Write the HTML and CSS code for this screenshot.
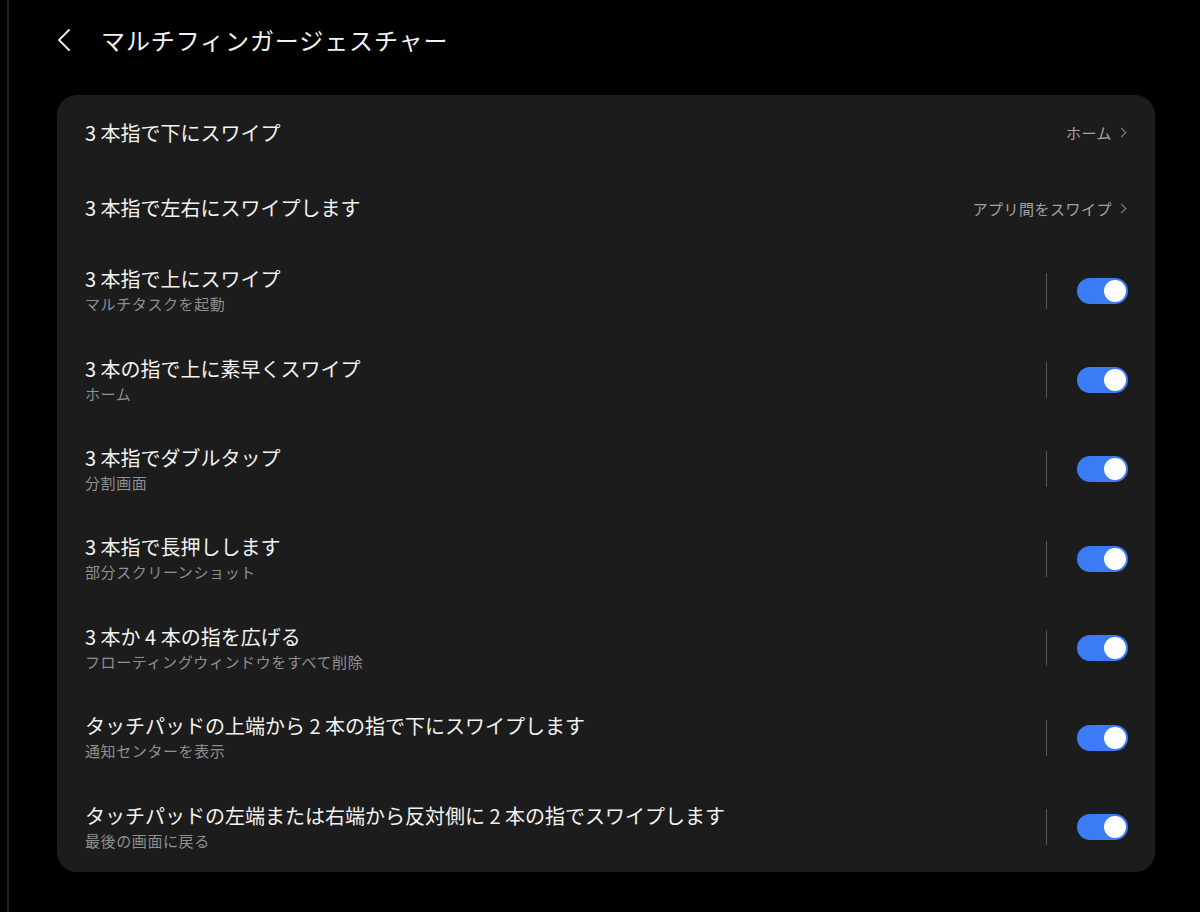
FILE: index.html
```html
<!DOCTYPE html>
<html lang="ja">
  <head>
    <meta charset="UTF-8" />
    <meta name="viewport" content="width=device-width, initial-scale=1.0" />
    <title>マルチフィンガージェスチャー</title>
    <link rel="stylesheet" href="styles.css">
  </head>
  <body>
    <div class="screen">
      <header class="topbar">
        <span class="back">
          <svg width="14" height="24" viewBox="0 0 14 24">
            <path d="M12 2 L2 12 L12 22" fill="none" stroke="#e6e6e6" stroke-width="2" stroke-linecap="round" stroke-linejoin="round"/>
          </svg>
        </span>
        <span class="page-title">マルチフィンガージェスチャー</span>
      </header>

      <div class="card">
        <div class="row short">
          <div class="texts">
            <span class="title">3 本指で下にスワイプ</span>
          </div>
          <div class="value">ホーム<span class="chev"></span></div>
        </div>
        <div class="row short">
          <div class="texts">
            <span class="title">3 本指で左右にスワイプします</span>
          </div>
          <div class="value">アプリ間をスワイプ<span class="chev"></span></div>
        </div>

        <div class="row">
          <div class="texts">
            <span class="title">3 本指で上にスワイプ</span>
            <span class="sub">マルチタスクを起動</span>
          </div>
          <div class="sep"></div>
          <div class="switch on"><span class="knob"></span></div>
        </div>
        <div class="row">
          <div class="texts">
            <span class="title">3 本の指で上に素早くスワイプ</span>
            <span class="sub">ホーム</span>
          </div>
          <div class="sep"></div>
          <div class="switch on"><span class="knob"></span></div>
        </div>
        <div class="row">
          <div class="texts">
            <span class="title">3 本指でダブルタップ</span>
            <span class="sub">分割画面</span>
          </div>
          <div class="sep"></div>
          <div class="switch on"><span class="knob"></span></div>
        </div>
        <div class="row">
          <div class="texts">
            <span class="title">3 本指で長押しします</span>
            <span class="sub">部分スクリーンショット</span>
          </div>
          <div class="sep"></div>
          <div class="switch on"><span class="knob"></span></div>
        </div>
        <div class="row">
          <div class="texts">
            <span class="title">3 本か 4 本の指を広げる</span>
            <span class="sub">フローティングウィンドウをすべて削除</span>
          </div>
          <div class="sep"></div>
          <div class="switch on"><span class="knob"></span></div>
        </div>
        <div class="row">
          <div class="texts">
            <span class="title">タッチパッドの上端から 2 本の指で下にスワイプします</span>
            <span class="sub">通知センターを表示</span>
          </div>
          <div class="sep"></div>
          <div class="switch on"><span class="knob"></span></div>
        </div>
        <div class="row">
          <div class="texts">
            <span class="title">タッチパッドの左端または右端から反対側に 2 本の指でスワイプします</span>
            <span class="sub">最後の画面に戻る</span>
          </div>
          <div class="sep"></div>
          <div class="switch on"><span class="knob"></span></div>
        </div>
      </div>
    </div>
  </body>
</html>
```

FILE: styles.css
```css
* {
    margin: 0;
    padding: 0;
    box-sizing: border-box;
}
html, body {
    background: #000;
}
body {
    font-family: "Noto Sans CJK JP", "Noto Sans", sans-serif;
    color: #f0f0f0;
}
.screen {
    margin-left: 7px;
    border-left: 2px solid #262626;
    min-height: 100vh;
    padding: 0 45px 0 48px;
}
.topbar {
    height: 80px;
    display: flex;
    align-items: center;
    margin-bottom: 15px;
}
.back {
    display: flex;
    width: 14px;
    margin-right: 30px;
}
.page-title {
    font-size: 24px;
    letter-spacing: 0.9px;
    color: #f2f2f2;
    line-height: 32px;
}
.card {
    background: #1c1c1c;
    border-radius: 20px;
    display: flex;
    flex-direction: column;
}
.row {
    height: 89.4px;
    display: flex;
    align-items: center;
    padding: 0 27px 0 28px;
}
.row.short {
    height: 75.5px;
}
.texts {
    flex: 1;
    display: flex;
    flex-direction: column;
}
.title {
    font-size: 20px;
    line-height: 24px;
    color: #f2f2f2;
}
.sub {
    font-size: 15px;
    letter-spacing: 0.6px;
    line-height: 20px;
    margin-top: 3px;
    color: #8f8f8f;
}
.value {
    display: flex;
    align-items: center;
    font-size: 15px;
    letter-spacing: 0.5px;
    color: #a3a3a3;
}
.chev {
    width: 7px;
    height: 7px;
    border-top: 1.5px solid #8a8a8a;
    border-right: 1.5px solid #8a8a8a;
    transform: rotate(45deg);
    margin-left: 6px;
    margin-right: 3px;
}
.sep {
    width: 1.5px;
    height: 36px;
    background: #555;
    margin-right: 30px;
}
.switch {
    width: 51px;
    height: 26px;
    border-radius: 13px;
    background: #3b7cf6;
    display: flex;
    align-items: center;
    justify-content: flex-end;
    padding: 0 2px;
}
.knob {
    width: 22px;
    height: 22px;
    border-radius: 50%;
    background: #fff;
}
```
